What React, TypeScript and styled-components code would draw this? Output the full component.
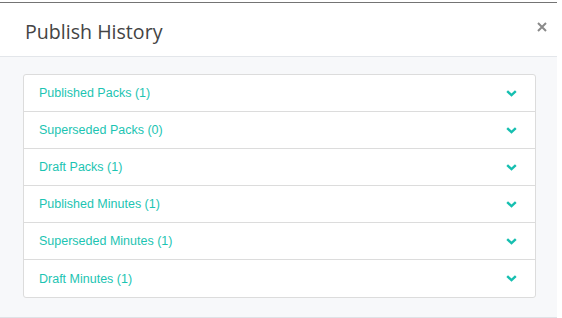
import styled, { createGlobalStyle } from "styled-components";

const GlobalStyle = createGlobalStyle`
    html, body {
        margin: 0;
        padding: 0;
        background: #ffffff;
    }
`

const StyledModal = styled.div`
    width: 557px;
    height: 316px;
    margin-top: 2px;
    border-top: 1px solid #747474;
    display: flex;
    flex-direction: column;
    background: #ffffff;
    box-sizing: border-box;
`

const StyledHeader = styled.div`
    height: 54px;
    display: flex;
    align-items: center;
    justify-content: space-between;
    padding: 3px 9px 0 25px;
    border-bottom: 1px solid #e3e6ea;
    box-sizing: border-box;
    flex-shrink: 0;
`

const StyledTitle = styled.h4`
    margin: 0;
    font-family: "Open Sans", sans-serif;
    font-size: 19.6px;
    font-weight: 400;
    color: #444444;
`

const StyledClose = styled.button`
    border: none;
    background: none;
    padding: 0;
    width: 12px;
    height: 12px;
    display: flex;
    align-items: center;
    justify-content: center;
    margin-top: -8px;
    cursor: pointer;
`

const StyledBody = styled.div`
    flex: 1;
    background: #f7f8fa;
    padding: 17px 21px 0 23px;
    border-bottom: 1px solid #dfe2e6;
    box-sizing: border-box;
`

const StyledAccordion = styled.div`
    border: 1px solid #dcdcdc;
    border-radius: 3px;
    background: #ffffff;
`

const StyledRow = styled.div<{ $last?: boolean }>`
    height: 37px;
    display: flex;
    align-items: center;
    justify-content: space-between;
    padding: 0 18px 0 15px;
    border-bottom: ${(p) => (p.$last ? "none" : "1px solid #dcdcdc")};
    box-sizing: border-box;
`

const StyledLabel = styled.span`
    font-family: "Liberation Sans", Arial, sans-serif;
    font-size: 12.5px;
    color: #1cc4b2;
`

const sections = [
    "Published Packs (1)",
    "Superseded Packs (0)",
    "Draft Packs (1)",
    "Published Minutes (1)",
    "Superseded Minutes (1)",
    "Draft Minutes (1)",
];

const Chevron = () => (
    <svg width="11" height="7" viewBox="0 0 11 7">
        <polyline points="1.2,1.2 5.5,5.2 9.8,1.2" fill="none" stroke="#16bfb0" strokeWidth="2.4" />
    </svg>
);

export default function App() {
    return (
        <>
            <GlobalStyle />
            <StyledModal>
                <StyledHeader>
                    <StyledTitle>Publish History</StyledTitle>
                    <StyledClose aria-label="Close">
                        <svg width="10" height="10" viewBox="0 0 10 10">
                            <path d="M1 1L9 9M9 1L1 9" stroke="#8a8a8a" strokeWidth="2" />
                        </svg>
                    </StyledClose>
                </StyledHeader>
                <StyledBody>
                    <StyledAccordion>
                        {sections.map((s, i) => (
                            <StyledRow key={s} $last={i === sections.length - 1}>
                                <StyledLabel>{s}</StyledLabel>
                                <Chevron />
                            </StyledRow>
                        ))}
                    </StyledAccordion>
                </StyledBody>
            </StyledModal>
        </>
    );
}
